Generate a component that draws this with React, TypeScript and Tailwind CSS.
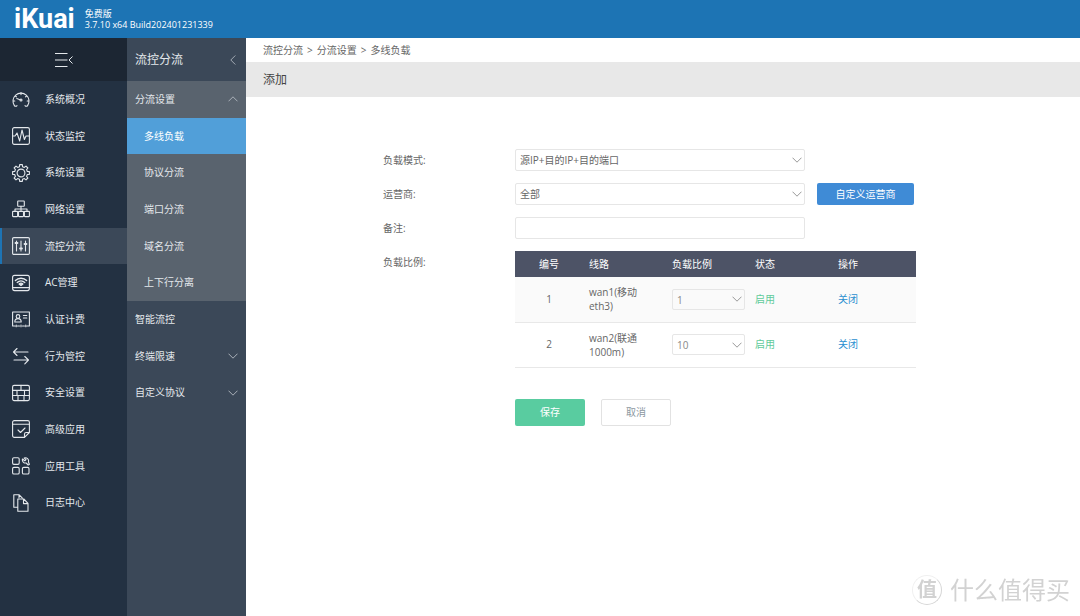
import React from "react";

interface IconProps {
  children: React.ReactNode
}

function Icon({ children }: IconProps) {
  return (
    <svg
      viewBox="0 0 18 18"
      className="h-[18px] w-[18px] shrink-0"
      fill="none"
      stroke="currentColor"
      strokeWidth={1.1}
      strokeLinecap="round"
      strokeLinejoin="round"
      aria-hidden="true"
    >
      {children}
    </svg>
  );
}

function point(radius: number, degrees: number) {
  const a = (degrees * Math.PI) / 180;
  return `${(9 + radius * Math.sin(a)).toFixed(2)} ${(9 - radius * Math.cos(a)).toFixed(2)}`;
}

// eight teeth around a ring
const gearPath =
  "M" +
  Array.from({ length: 8 }, (_, i) => i * 45)
    .map((a) => [point(6.5, a - 14), point(8.5, a - 9), point(8.5, a + 9), point(6.5, a + 14)].join("L"))
    .join("L") +
  "Z";

const icons = {
  gauge: (
    <Icon>
      <path d="M5 15.6c-.8 1-2 .9-2.6 0a8 8 0 1 1 13.2 0c-.6.9-1.8 1-2.6 0" />
      <path d="M9 2.6v2M3.6 6.2l.8.6M14.4 6.2l-.8.6M1.4 11h1.4M15.2 11h1.4M8 9.8 4.8 8.6" />
      <circle cx="9" cy="10" r="1" />
    </Icon>
  ),
  pulse: (
    <Icon>
      <rect x="0.6" y="0.6" width="16.8" height="16.8" rx="1.6" />
      <path d="M.6 9H3l2-3 2.7 8L10 3l2.4 9.5L14 9h3.4" />
    </Icon>
  ),
  gear: (
    <Icon>
      <path d={gearPath} />
      <circle cx="9" cy="9" r="3.9" />
    </Icon>
  ),
  network: (
    <Icon>
      <rect x="5.7" y="1" width="6.6" height="5.2" rx="0.5" />
      <path d="M9 6.2v5M3 11.2V9h12v2.2" />
      <rect x="0.6" y="11.4" width="5" height="5.2" rx="0.5" />
      <rect x="6.5" y="11.4" width="5" height="5.2" rx="0.5" />
      <rect x="12.4" y="11.4" width="5" height="5.2" rx="0.5" />
    </Icon>
  ),
  sliders: (
    <Icon>
      <rect x="0.6" y="0.6" width="16.8" height="16.8" rx="1.2" />
      <path d="M4.5 4v10M9 4v10M13.5 4v10" />
      <path d="M3.6 6h1.8M8.1 11.5h1.8M12.6 7h1.8" strokeWidth={2} />
    </Icon>
  ),
  router: (
    <Icon>
      <rect x="0.6" y="1.4" width="16.8" height="15.2" rx="2" />
      <path d="M.6 13.6h16.8" />
      <path d="M3.4 6.6c3-3.2 8.2-3.2 11.2 0" strokeWidth={1.4} />
      <path d="M5.2 8.4c2.2-2 5.4-2 7.6 0" strokeWidth={1.4} />
      <path d="M7 10c1.200-1 2.800-1 4 0L9 11.600Z" fill="currentColor" />
    </Icon>
  ),
  card: (
    <Icon>
      <path d="M3 16H.6V2h16.8v14H15M5.5 16h2M10.5 16h2M4.2 15v1.8M9 15v1.8M13.8 15v1.8" />
      <circle cx="6" cy="6.4" r="1.8" />
      <path d="M2.8 12c0-2.4 1.4-3.4 3.2-3.4S9.2 9.6 9.2 12Z" />
      <path d="M11.4 5.5h3.4M11.4 8h3.4" />
    </Icon>
  ),
  arrows: (
    <Icon>
      <path d="M16 5H1.5M5 1.5 1.5 5 5 8.5M2 13h14.5M12.8 9.5l3.7 3.5-3.7 3.8" />
    </Icon>
  ),
  wall: (
    <Icon>
      <rect x="0.6" y="1.4" width="16.8" height="15.2" rx="1.5" />
      <path d="M.6 6.4h16.8M.6 11.5h16.8M9 1.4v5M5 6.4v5.1M12.5 6.4v5.1M6 11.5v5.1M12 11.5v5.1" />
    </Icon>
  ),
  task: (
    <Icon>
      <path d="M12.5 17.4H2.2A1.6 1.6 0 0 1 .6 15.8V2.2A1.6 1.6 0 0 1 2.2.6h13.6a1.6 1.6 0 0 1 1.6 1.6v10.3l-4.9 4.9v-3.3a1.6 1.6 0 0 1 1.6-1.6h3.3" />
      <path d="M.6 4.2h16.8M6 10l2.5 2.500L13 8" />
    </Icon>
  ),
  tools: (
    <Icon>
      <rect x="0.6" y="0.8" width="6.6" height="6.6" rx="1.3" />
      <rect x="0.6" y="10.4" width="6.6" height="6.6" rx="1.3" />
      <rect x="10.4" y="10.4" width="6.6" height="6.6" rx="1.3" />
      <path d="M12.2 1a3.2 3.2 0 0 1 4.2 4l1 2.2-1.2.8-2-2a3.2 3.2 0 0 1-3.7-4l2.3 1.800 1.200-1.200Z" />
    </Icon>
  ),
  docs: (
    <Icon>
      <path d="M5.500 13.200H1.800V.8h5.400l3.200 3.400M7 .8v3" />
      <path d="M5.800 5h6l4.200 4.400v7.800H5.800ZM11.500 5v4.600H16" />
    </Icon>
  ),
};

const mainMenu = [
  { name: "系统概况", icon: icons.gauge },
  { name: "状态监控", icon: icons.pulse },
  { name: "系统设置", icon: icons.gear },
  { name: "网络设置", icon: icons.network },
  { name: "流控分流", icon: icons.sliders, active: true },
  { name: "AC管理", icon: icons.router },
  { name: "认证计费", icon: icons.card },
  { name: "行为管控", icon: icons.arrows },
  { name: "安全设置", icon: icons.wall },
  { name: "高级应用", icon: icons.task },
  { name: "应用工具", icon: icons.tools },
  { name: "日志中心", icon: icons.docs },
];

const subMenu = [
  { name: "分流设置", open: true },
  { name: "多线负载", child: true, active: true },
  { name: "协议分流", child: true },
  { name: "端口分流", child: true },
  { name: "域名分流", child: true },
  { name: "上下行分离", child: true },
  { name: "智能流控" },
  { name: "终端限速", arrow: true },
  { name: "自定义协议", arrow: true },
];

const lines = [
  { id: 1, name: "wan1(移动", detail: "eth3)", ratio: "1" },
  { id: 2, name: "wan2(联通", detail: "1000m)", ratio: "10" },
];

function Chevron({ className }: { className: string }) {
  return (
    <svg viewBox="0 0 10 6" className={`h-[6px] w-[10px] ${className}`} fill="none" stroke="currentColor" aria-hidden="true">
      <path d="M.5.7 5 5.2 9.5.7" />
    </svg>
  );
}

interface SelectProps {
  id?: string
  label?: string
  options: string[]
  className: string
}

function Select({ id, label, options, className }: SelectProps) {
  return (
    <div className={`relative ${className}`}>
      <select
        id={id}
        aria-label={label}
        className="h-full w-full appearance-none rounded-xs border border-[#e6e6e6] bg-transparent pr-5 pl-1 leading-5"
      >
        {options.map((o) => (
          <option key={o}>{o}</option>
        ))}
      </select>
      <Chevron className="pointer-events-none absolute top-1/2 right-[3px] -translate-y-1/2 text-[#999]" />
    </div>
  );
}

function Header() {
  return (
    <header className="flex h-[38px] shrink-0 items-center gap-[10px] bg-[#1d74b4] pl-[14px] text-white">
      <a href="#" className="font-[Roboto,sans-serif] text-[27px] leading-8 font-bold">iKuai</a>
      <div className="text-[9px] leading-[11px]">
        <p>免费版</p>
        <p>3.7.10 x64 Build202401231339</p>
      </div>
    </header>
  );
}

function Sidebar() {
  return (
    <aside className="flex w-[127px] shrink-0 flex-col bg-[#233142] text-[#e4e8ec]">
      <button aria-label="收起菜单" className="flex h-[43px] items-center justify-center bg-[#1c2633]">
        <svg viewBox="0 0 18 16" className="h-4 w-[18px]" fill="none" stroke="currentColor" aria-hidden="true">
          <path d="M0 1.5h12.5M0 8h12.5M0 14.5h12.5M17.5 4.5 14 8l3.5 3.5" />
        </svg>
      </button>
      <nav className="flex h-[440px] flex-col">
        {mainMenu.map((item) => (
          <a
            key={item.name}
            href="#"
            className={`flex flex-1 items-center gap-[15px] border-l-2 pl-[10px] ${
              item.active ? "border-[#1d74b4] bg-[#3b4858]" : "border-transparent"
            }`}
          >
            {item.icon}
            <span>{item.name}</span>
          </a>
        ))}
      </nav>
    </aside>
  );
}

function SubMenu() {
  return (
    <aside className="flex w-[119px] shrink-0 flex-col bg-[#3b4858] text-[#e4e8ec]">
      <div className="flex h-[43px] items-center justify-between px-2">
        <h2 className="text-[12px]">流控分流</h2>
        <button aria-label="返回" className="text-[#a3abb4]">
          <Chevron className="rotate-90" />
        </button>
      </div>
      <nav className="flex h-[330px] flex-col">
        {subMenu.map((item) => (
          <a
            key={item.name}
            href="#"
            className={`flex flex-1 items-center justify-between pr-2 ${item.child ? "pl-[17px]" : "pl-2"} ${
              item.active ? "bg-[#519fd9] text-white" : item.child || item.open ? "bg-[#59636e]" : ""
            }`}
          >
            {item.name}
            {item.open && <Chevron className="rotate-180 text-[#a9b0b8]" />}
            {item.arrow && <Chevron className="text-[#a9b0b8]" />}
          </a>
        ))}
      </nav>
    </aside>
  );
}

function LoadTable() {
  return (
    <table className="w-full max-w-[401px] table-fixed text-left">
      <colgroup>
        <col className="w-[68px]" />
        <col className="w-[83px]" />
        <col className="w-[83px]" />
        <col className="w-[83px]" />
        <col />
      </colgroup>
      <thead className="bg-[#4d5366] text-white">
        <tr className="h-[26px]">
          <th className="text-center font-normal">编号</th>
          <th className="pl-[6px] font-normal">线路</th>
          <th className="pl-[6px] font-normal">负载比例</th>
          <th className="pl-[6px] font-normal">状态</th>
          <th className="pl-[6px] font-normal">操作</th>
        </tr>
      </thead>
      <tbody>
        {lines.map((line) => (
          <tr key={line.id} className="h-[45px] border-b border-[#e8e8e8] odd:bg-[#fafafa]">
            <td className="text-center">{line.id}</td>
            <td className="pl-[6px] leading-[14px]">
              {line.name}
              <br />
              {line.detail}
            </td>
            <td className="pr-1 pl-[6px] text-[#888]">
              <Select label={`${line.name}${line.detail} 负载比例`} options={[line.ratio]} className="h-[21px]" />
            </td>
            <td className="pl-[6px] text-[#5fcb9b]">启用</td>
            <td className="pl-[6px]">
              <a href="#" className="text-[#2b8fd0]">关闭</a>
            </td>
          </tr>
        ))}
      </tbody>
    </table>
  );
}

function LoadForm() {
  return (
    <form className="grid grid-cols-[132px_1fr] gap-y-3 pt-[52px] pl-[137px]">
      <label htmlFor="mode" className="leading-[22px]">负载模式:</label>
      <Select id="mode" options={["源IP+目的IP+目的端口"]} className="h-[22px] w-full max-w-[290px]" />

      <label htmlFor="isp" className="leading-[22px]">运营商:</label>
      <div className="flex gap-3">
        <Select id="isp" options={["全部"]} className="h-[22px] w-full max-w-[290px]" />
        <button type="button" className="h-[22px] w-[97px] shrink-0 rounded-xs bg-[#3f8bd6] text-white">
          自定义运营商
        </button>
      </div>

      <label htmlFor="note" className="leading-[22px]">备注:</label>
      <input id="note" type="text" className="h-[22px] w-full max-w-[290px] rounded-xs border border-[#e6e6e6] px-1" />

      <span className="leading-[22px]">负载比例:</span>
      <LoadTable />

      <div className="col-start-2 flex gap-4 pt-[19px]">
        <button type="submit" className="h-[27px] w-[70px] rounded-xs bg-[#59cca0] text-white">保存</button>
        <button type="button" className="h-[27px] w-[70px] rounded-xs border border-[#e2e2e2] text-[#8b979f]">取消</button>
      </div>
    </form>
  );
}

function Watermark() {
  return (
    <div className="pointer-events-none fixed right-[10px] bottom-[11px] flex items-center gap-2 text-[#d2d2d2]">
      <span className="flex h-[30px] w-[30px] items-center justify-center rounded-full border border-[#d6d6d6] border-t-[#f0f0f0] border-l-[#f0f0f0] text-[20px] leading-[28px] font-bold">
        值
      </span>
      <span className="text-[24px] leading-[30px]">什么值得买</span>
    </div>
  );
}

export default function App() {
  return (
    <div className="flex min-h-screen flex-col bg-white font-['Open_Sans','Noto_Sans_CJK_SC',sans-serif] text-[10px] text-[#666]">
      <Header />
      <div className="flex flex-1">
        <Sidebar />
        <SubMenu />
        <main className="min-w-0 flex-1">
          <nav className="flex gap-1 pl-[17px] leading-6">
            <a href="#">流控分流</a>
            <span>&gt;</span>
            <a href="#">分流设置</a>
            <span>&gt;</span>
            <span>多线负载</span>
          </nav>
          <h1 className="bg-[#e8e8e8] pl-[17px] text-[12px] leading-[35px] text-[#444]">添加</h1>
          <LoadForm />
        </main>
      </div>
      <Watermark />
    </div>
  );
}
